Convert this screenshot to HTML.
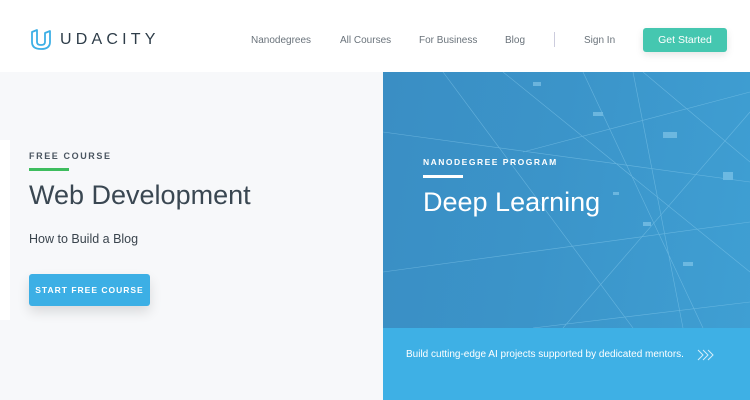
<!DOCTYPE html>
<html><head><style>
*{margin:0;padding:0;box-sizing:border-box}
body{width:750px;height:400px;overflow:hidden;font-family:"Liberation Sans",sans-serif;background:#f7f8fa;position:relative}
.hdr{position:absolute;left:0;top:0;width:750px;height:72px;background:#fff}
.logo{position:absolute;left:30px;top:29px}
.brand{position:absolute;left:60px;top:31px;font-size:16px;letter-spacing:4.2px;color:#2e3d49}
.nav{position:absolute;top:35px;font-size:10px;color:#6a737b}
.sep{position:absolute;left:554px;top:32px;width:1px;height:15px;background:#ccd}
.gs{position:absolute;left:643px;top:28px;width:84px;height:24px;background:#45c7b0;border-radius:3px;color:#fff;font-size:10.5px;text-align:center;line-height:24px;box-shadow:0 3px 8px rgba(0,0,0,.1)}
.left{position:absolute;left:0;top:140px;width:10px;height:180px;background:#fff}
.fc{position:absolute;left:29px;top:151px;font-size:9px;font-weight:bold;letter-spacing:1.6px;color:#4a5560}
.gl{position:absolute;left:29px;top:168px;width:40px;height:3px;background:#3ebd5e}
.t1{position:absolute;left:29px;top:180px;font-size:27px;color:#3a4752}
.t2{position:absolute;left:29px;top:232px;font-size:12.5px;color:#3a444d}
.btn{position:absolute;left:29px;top:274px;width:121px;height:32px;background:#3cafe5;border-radius:3px;color:#fff;font-size:8.5px;font-weight:bold;letter-spacing:1px;text-align:center;line-height:32px;box-shadow:0 6px 12px rgba(0,0,0,.12)}
.rp{position:absolute;left:383px;top:72px;width:367px;height:256px;background:linear-gradient(100deg,#3a8ec4 0%,#3b94c9 45%,#3f9fd3 100%);overflow:hidden}
.rb{position:absolute;left:383px;top:328px;width:367px;height:72px;background:#3eb0e5}
.np{position:absolute;left:423px;top:157px;font-size:8.5px;font-weight:bold;letter-spacing:1.5px;color:#fff}
.wl{position:absolute;left:423px;top:175px;width:40px;height:3px;background:#fff}
.t3{position:absolute;left:423px;top:187px;font-size:27px;color:#fff}
.bt{position:absolute;left:406px;top:349px;font-size:10px;color:#fff}
.ar{position:absolute;left:697px;top:349px}
</style></head><body>
<div class="hdr"></div>
<svg class="logo" width="22" height="22" viewBox="0 0 22 22"><path d="M2 3 L2 13 Q2 20 11 20 Q20 20 20 13 L20 2 L15 4 L15 13 Q15 16 11 16 Q7 16 7 13 L7 1 Z" fill="none" stroke="#3cafe5" stroke-width="1.8" stroke-linejoin="round"/></svg>
<div class="brand">UDACITY</div>
<div class="nav" style="left:251px">Nanodegrees</div>
<div class="nav" style="left:340px">All Courses</div>
<div class="nav" style="left:419px">For Business</div>
<div class="nav" style="left:505px">Blog</div>
<div class="sep"></div>
<div class="nav" style="left:584px">Sign In</div>
<div class="gs">Get Started</div>
<div class="left"></div>
<div class="fc">FREE COURSE</div>
<div class="gl"></div>
<div class="t1">Web Development</div>
<div class="t2">How to Build a Blog</div>
<div class="btn">START FREE COURSE</div>
<div class="rp"><svg width="367" height="256" stroke="#8fd0f0" stroke-width="0.6" opacity="0.5" fill="none">
<path d="M60 0 L250 256 M120 0 L367 200 M0 60 L367 110 M180 256 L367 40 M250 0 L300 256 M0 200 L367 150 M140 80 L367 20 M200 0 L320 256 M260 0 L367 90 M150 256 L367 230"/>
<g fill="#9bd6f3" stroke="none"><rect x="150" y="10" width="8" height="4"/><rect x="210" y="40" width="10" height="4"/><rect x="280" y="60" width="14" height="6"/><rect x="340" y="100" width="10" height="8"/><rect x="260" y="150" width="8" height="4"/><rect x="300" y="190" width="10" height="4"/><rect x="230" y="120" width="6" height="3"/></g></svg></div>
<div class="rb"></div>
<div class="np">NANODEGREE PROGRAM</div>
<div class="wl"></div>
<div class="t3">Deep Learning</div>
<div class="bt">Build cutting-edge AI projects supported by dedicated mentors.</div>
<svg class="ar" width="18" height="12" viewBox="0 0 18 12" fill="none" stroke="#d5eefa" stroke-width="1"><path d="M1 1 L6 6 L1 11 M6 1 L11 6 L6 11 M11 1 L16 6 L11 11"/></svg>
</body></html>
